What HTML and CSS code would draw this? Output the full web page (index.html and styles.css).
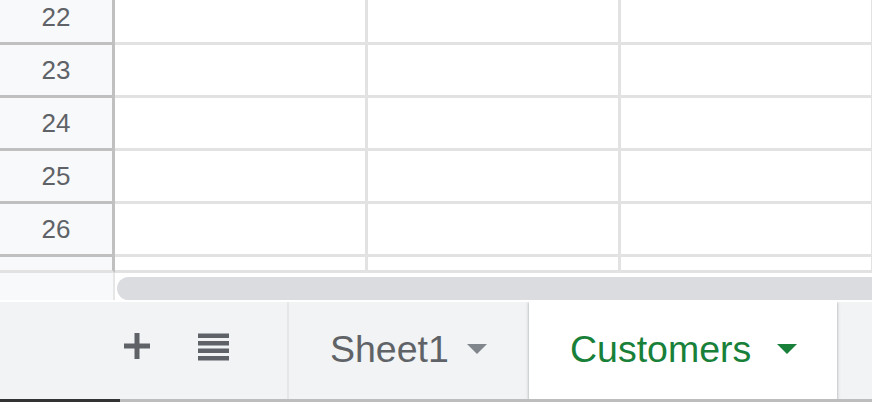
FILE: index.html
```html
<!DOCTYPE html>
<html lang="en">
<head>
<meta charset="utf-8">
<title>Sheet</title>
<link rel="stylesheet" href="styles.css">
</head>
<body>
<div class="sheet">
  <div class="grid">
    <div class="row first"><div class="rh">22</div><div class="cell"></div><div class="cell"></div><div class="cell"></div></div>
    <div class="row"><div class="rh">23</div><div class="cell"></div><div class="cell"></div><div class="cell"></div></div>
    <div class="row"><div class="rh">24</div><div class="cell"></div><div class="cell"></div><div class="cell"></div></div>
    <div class="row"><div class="rh">25</div><div class="cell"></div><div class="cell"></div><div class="cell"></div></div>
    <div class="row"><div class="rh">26</div><div class="cell"></div><div class="cell"></div><div class="cell"></div></div>
    <div class="row partial"><div class="rh"></div><div class="cell"></div><div class="cell"></div><div class="cell"></div></div>
  </div>
  <div class="hscroll">
    <div class="hs-corner"></div>
    <div class="hs-track"><div class="hs-thumb"></div></div>
  </div>
  <div class="tabbar">
    <div class="tab-tools">
      <svg class="icon-plus" width="26" height="26" viewBox="0 0 26 26"><rect x="0" y="10.5" width="26" height="5" fill="#5f6368"/><rect x="10.5" y="0" width="5" height="26" fill="#5f6368"/></svg>
      <svg class="icon-list" width="31" height="28" viewBox="0 0 31 28"><rect x="0" y="0.5" width="31" height="4.5" fill="#5f6368"/><rect x="0" y="8" width="31" height="4.5" fill="#5f6368"/><rect x="0" y="15.5" width="31" height="4.5" fill="#5f6368"/><rect x="0" y="23" width="31" height="4.5" fill="#5f6368"/></svg>
    </div>
    <div class="tab tab-sheet1">
      <span class="tab-name">Sheet1</span>
      <svg class="tab-arrow" width="20" height="10" viewBox="0 0 20 10"><polygon points="0,0 20,0 10,10" fill="currentColor"/></svg>
    </div>
    <div class="tab tab-active">
      <span class="tab-name">Customers</span>
      <svg class="tab-arrow" width="20" height="10" viewBox="0 0 20 10"><polygon points="0,0 20,0 10,10" fill="currentColor"/></svg>
    </div>
  </div>
  <div class="bottombar"><div class="bb-thumb"></div></div>
</div>
</body>
</html>
```
FILE: styles.css
```css
html, body {
  margin: 0;
  padding: 0;
  background: #ffffff;
}
body {
  width: 872px;
  height: 402px;
  overflow: hidden;
  font-family: "Liberation Sans", Arial, sans-serif;
}
.sheet {
  width: 872px;
  height: 402px;
  display: flex;
  flex-direction: column;
  overflow: hidden;
}
.grid {
  height: 273px;
  overflow: hidden;
  flex: none;
}
.row {
  display: flex;
  height: 53px;
}
.row.first {
  margin-top: -8px;
}
.row.partial {
  height: 16px;
}
.rh {
  flex: none;
  width: 112px;
  background: #f8f9fa;
  border-right: 3px solid #c0c0c0;
  border-bottom: 3px solid #c0c0c0;
  display: flex;
  align-items: center;
  justify-content: center;
  font-size: 26px;
  color: #5f6368;
}
.row.partial .rh {
  border-bottom-color: #e2e2e2;
}
.cell {
  flex: none;
  width: 250px;
  border-right: 3px solid #e2e2e2;
  border-bottom: 3px solid #e2e2e2;
  background: #ffffff;
}
.hscroll {
  flex: none;
  height: 29px;
  display: flex;
  background: #ffffff;
}
.hs-corner {
  flex: none;
  width: 113px;
  height: 27px;
  background: #f8f9fa;
  border-right: 2px solid #e6e6e6;
}
.hs-track {
  flex: 1;
  padding: 4px 0 2px 2px;
}
.hs-thumb {
  height: 23px;
  width: 800px;
  background: #dadce0;
  border-radius: 12px 0 0 12px;
}
.tabbar {
  flex: none;
  height: 97px;
  background: #f1f3f4;
  display: flex;
  overflow: hidden;
}
.tab-tools {
  flex: none;
  width: 163px;
  padding: 31px 0 0 124px;
  display: flex;
  align-items: flex-start;
  gap: 48px;
  border-right: 2px solid #e4e6e8;
}
.tab {
  flex: none;
  box-sizing: border-box;
  height: 97px;
  padding: 0 40px 2px 41px;
  display: flex;
  align-items: center;
  font-size: 37.5px;
  color: #5f6368;
}
.tab-sheet1 {
  width: 238px;
}
.tab-sheet1 .tab-arrow {
  color: #80868b;
}
.tab-active {
  width: 308px;
  margin-left: 2px;
  background: #ffffff;
  color: #188038;
  position: relative;
  z-index: 1;
  box-shadow: 0 1px 3px 1px rgba(60, 64, 67, 0.15), 0 1px 2px rgba(60, 64, 67, 0.3);
}
.tab-name {
  white-space: nowrap;
}
.tab-arrow {
  margin-left: auto;
  margin-bottom: 2px;
  flex: none;
}
.bottombar {
  flex: none;
  height: 3px;
  background: #bdbdbd;
}
.bb-thumb {
  width: 120px;
  height: 3px;
  background: #333333;
}
```
